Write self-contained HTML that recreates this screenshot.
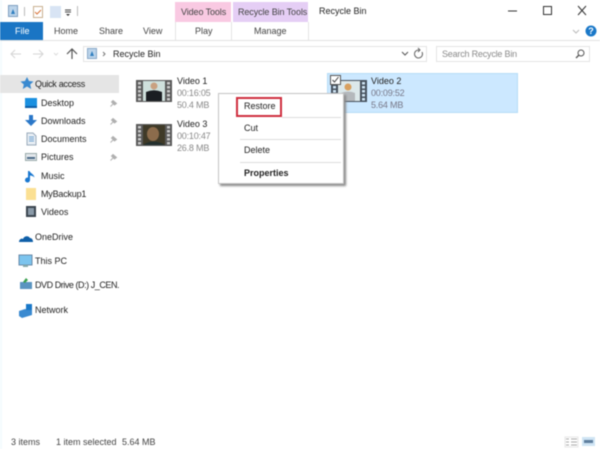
<!DOCTYPE html>
<html><head><meta charset="utf-8"><style>
html,body{margin:0;padding:0;background:#fff}
#w{position:relative;width:600px;height:449px;overflow:hidden;background:#fff;font:9px/12px "Liberation Sans",sans-serif;color:#222;filter:blur(.4px)}
#w div,#w svg{position:absolute}
.t{white-space:nowrap}
.g{color:#8a8a8a;letter-spacing:-.2px}
.n{left:35px}.m{left:41px}
</style></head><body><div id="w">
<div style="left:0;top:0;width:2px;height:449px;background:#f4fbfe"></div>
<!-- title bar -->
<svg style="left:7px;top:4px" width="72" height="16"><rect x="1.500" y="1.500" width="9" height="11" fill="#bcd4ea" stroke="#7f9fc0"/><path d="M4 10l2-5 2 5z" fill="#2f7fc0"/><path d="M17.500 3v9" stroke="#bbb"/><rect x="26.500" y="2.500" width="9" height="11" fill="#fff" stroke="#c9b190"/><path d="M28 8l2 2 4-4" stroke="#d9743a" fill="none"/><rect x="43" y="2" width="11" height="12" fill="#d8e4f4"/><path d="M58 6h6M58 8h6" stroke="#444"/><path d="M59 10h4l-2 2z" fill="#333"/><path d="M70.500 2v10" stroke="#bbb"/></svg>
<div style="left:175px;top:2px;width:56px;height:20px;background:#f9c9e2"></div>
<div style="left:233px;top:2px;width:75px;height:20px;background:#e5cef5"></div>
<div class="t" style="left:181px;top:6px;color:#444;letter-spacing:-.1px">Video Tools</div>
<div class="t" style="left:238px;top:6px;color:#444;letter-spacing:-.1px">Recycle Bin Tools</div>
<div class="t" style="left:319px;top:5px;color:#222">Recycle Bin</div>
<svg style="left:500px;top:2px" width="100" height="36"><path d="M8 9h9" stroke="#333"/><rect x="43.500" y="4.500" width="8" height="8" fill="none" stroke="#333"/><path d="M78 4l8 9M86 4l-8 9" stroke="#333"/><path d="M73 28l3 3 3-3" stroke="#bbb" fill="none"/><circle cx="91" cy="29" r="5.500" fill="#1a78c8"/></svg>
<div style="left:588px;top:25px;color:#fff;font-weight:bold;width:6px;text-align:center;font-size:9px">?</div>
<!-- tabs -->
<div style="left:0;top:22px;width:43px;height:18px;background:#1a75c4"></div>
<div class="t" style="left:15px;top:25px;color:#fff">File</div>
<div class="t" style="left:54px;top:25px;color:#444">Home</div>
<div class="t" style="left:99px;top:25px;color:#444">Share</div>
<div class="t" style="left:143px;top:25px;color:#444">View</div>
<div class="t" style="left:195px;top:25px;color:#444">Play</div>
<div class="t" style="left:254px;top:25px;color:#444">Manage</div>
<div style="left:175px;top:22px;width:1px;height:18px;background:#e4e4e4"></div>
<div style="left:231px;top:22px;width:1px;height:18px;background:#e4e4e4"></div>
<div style="left:308px;top:22px;width:1px;height:18px;background:#e4e4e4"></div>
<div style="left:0;top:40px;width:600px;height:1px;background:#e2e2e2"></div>
<!-- address -->
<svg style="left:8px;top:46px" width="72" height="16"><path d="M3 8h10M7 4l-4 4 4 4" stroke="#d4d4d4" fill="none"/><path d="M25 8h10M31 4l4 4-4 4" stroke="#d4d4d4" fill="none"/><path d="M46 7l2 2 2-2" stroke="#ddd" fill="none"/><path d="M64 13V3M59 8l5-5 5 5" stroke="#555" fill="none" stroke-width="1.200"/></svg>
<div style="left:83px;top:46px;width:344px;height:16px;border:1px solid #e4e4e4;box-sizing:border-box"></div>
<svg style="left:86px;top:47px" width="20" height="14"><rect x="1.500" y="1.500" width="9" height="10" fill="#bcd4ea" stroke="#8aa9c9"/><path d="M4 9l2-5 2 5z" fill="#2f7fc0"/><path d="M17 5l2 2-2 2" stroke="#777" fill="none"/></svg>
<div class="t" style="left:113px;top:48px">Recycle Bin</div>
<svg style="left:401px;top:47px" width="20" height="14"><path d="M1 5l3 3 3-3" stroke="#555" fill="none"/></svg>
<svg style="left:411px;top:46px" width="16" height="16"><path d="M11 6a4 4 0 1 1-3-2" stroke="#666" fill="none"/><path d="M7 2l2 2-2 2" stroke="#666" fill="none"/></svg>
<div style="left:436px;top:46px;width:154px;height:16px;border:1px solid #e4e4e4;box-sizing:border-box"></div>
<div class="t g" style="left:442px;top:48px">Search Recycle Bin</div>
<svg style="left:574px;top:48px" width="12" height="12"><circle cx="7" cy="5" r="3" fill="none" stroke="#555"/><path d="M5 7l-3 3" stroke="#555" stroke-width="1.300"/></svg>
<!-- sidebar -->
<div style="left:0;top:75px;width:119px;height:18px;background:#e5e5e5"></div>
<svg style="left:20px;top:76px" width="14" height="14"><path d="M7 1l2 4 4.500.500-3.300 3 1 4.500L7 10.500 2.800 13l1-4.500-3.300-3L5 5z" fill="#3a8ad0"/></svg>
<div class="t n" style="top:78px;letter-spacing:-.3px">Quick access</div>
<svg style="left:24px;top:96px" width="14" height="124">
<rect x="1" y="2" width="12" height="9" fill="#1a90e0"/><rect x="1" y="10" width="12" height="2" fill="#0d5fa8"/>
<path d="M5 19h4v5h4l-6 6-6-6h4z" fill="#2a77c8"/>
<path d="M3 37h6l3 3v9H3z" fill="#e8eef4" stroke="#9ab"/><path d="M5 41h5M5 43h5M5 45h5" stroke="#6fa3d0"/>
<rect x="1.500" y="57.500" width="11" height="7" fill="#e4e8ec" stroke="#9aa"/><path d="M3 62h8" stroke="#4a6a88" stroke-width="2"/>
<path d="M4 75h1.500c1 2.500 4.500 3 5 6.500-1.500-1.500-3-2-4.500-2V84a2.500 2.500 0 1 1-2-2.400z" fill="#1a78d0"/>
<rect x="2" y="92" width="10" height="12" fill="#fbe093"/>
<rect x="2" y="110" width="10" height="11" fill="#3c4650"/><rect x="4" y="112" width="6" height="7" fill="#8a9aa8"/>
</svg>
<div class="t m" style="top:97px">Desktop</div>
<div class="t m" style="top:115px">Downloads</div>
<div class="t m" style="top:133px">Documents</div>
<div class="t m" style="top:151px">Pictures</div>
<div class="t m" style="top:170px">Music</div>
<div class="t m" style="top:188px;letter-spacing:-.2px">MyBackup1</div>
<div class="t m" style="top:206px">Videos</div>
<svg style="left:109px;top:98px" width="10" height="66" fill="#b0b0b0" stroke="#b0b0b0"><path d="M1.500 8.500l3-3" fill="none"/><path d="M4 2.500l3.500 3-2 1.500-3-3z"/><path d="M1.500 26.500l3-3" fill="none"/><path d="M4 20.500l3.500 3-2 1.500-3-3z"/><path d="M1.500 44.500l3-3" fill="none"/><path d="M4 38.500l3.500 3-2 1.500-3-3z"/><path d="M1.500 62.500l3-3" fill="none"/><path d="M4 56.500l3.500 3-2 1.500-3-3z"/></svg>
<svg style="left:18px;top:231px" width="16" height="90">
<path d="M1 11c0-3 3-4 4-3 1-3 5-4 7-1 2 0 3 2 3 4z" fill="#0f5fa8"/>
<rect x="1" y="24" width="13" height="10" fill="#7cc4ee" stroke="#6a8aa8"/><rect x="5" y="34" width="5" height="2" fill="#8aa"/>
<rect x="2" y="51" width="12" height="7" fill="#5a94c0"/><path d="M5 51l3-4 2 2-3 3z" fill="#3aa050"/>
<path d="M1 80l6-2 7 1v5l-10 3-3-2z" fill="#3a8ad0"/><rect x="8" y="73" width="6" height="6" fill="#1a78c8"/>
</svg>
<div class="t n" style="top:231px">OneDrive</div>
<div class="t n" style="top:255px">This PC</div>
<div class="t n" style="top:279px;letter-spacing:-.45px">DVD Drive (D:) J_CEN.</div>
<div class="t n" style="top:304px">Network</div>
<!-- selection -->
<div style="left:327px;top:73px;width:191px;height:40px;background:#cce8ff;border:1px solid #b5dcf7;box-sizing:border-box"></div>
<!-- thumbnails -->
<svg style="left:136px;top:80px" width="36" height="66">
<rect width="36" height="22" fill="#5a5a5a"/><rect x="7" y="1" width="22" height="20" fill="#cfe0dc"/>
<circle cx="18" cy="6" r="3.500" fill="#c9a080"/><path d="M10 21v-9q8-3.500 16 0v9z" fill="#1a1d22"/>
<g fill="#c8c8c8"><rect x="2" y="2" width="3" height="2.500"/><rect x="2" y="6" width="3" height="2.500"/><rect x="2" y="10" width="3" height="2.500"/><rect x="2" y="14" width="3" height="2.500"/><rect x="2" y="18" width="3" height="2.500"/><rect x="31" y="2" width="3" height="2.500"/><rect x="31" y="6" width="3" height="2.500"/><rect x="31" y="10" width="3" height="2.500"/><rect x="31" y="14" width="3" height="2.500"/><rect x="31" y="18" width="3" height="2.500"/></g>
<g transform="translate(0 44)"><rect width="36" height="22" fill="#5a5a5a"/><rect x="7" y="1" width="22" height="20" fill="#3f3a28"/><ellipse cx="17" cy="10" rx="6" ry="7" fill="#8c6c4c"/><path d="M7 21q10-7 22 0z" fill="#23302e"/>
<g fill="#c8c8c8"><rect x="2" y="2" width="3" height="2.500"/><rect x="2" y="6" width="3" height="2.500"/><rect x="2" y="10" width="3" height="2.500"/><rect x="2" y="14" width="3" height="2.500"/><rect x="2" y="18" width="3" height="2.500"/><rect x="31" y="2" width="3" height="2.500"/><rect x="31" y="6" width="3" height="2.500"/><rect x="31" y="10" width="3" height="2.500"/><rect x="31" y="14" width="3" height="2.500"/><rect x="31" y="18" width="3" height="2.500"/></g></g>
</svg>
<svg style="left:331px;top:80px" width="36" height="22">
<rect width="36" height="22" fill="#47525e"/><rect x="7" y="1" width="22" height="20" fill="#dce8ea"/>
<circle cx="17" cy="7" r="3.500" fill="#d8a060"/><path d="M10 21v-8q7-3 14 0v8z" fill="#b4b8bc"/>
<g fill="#cfe4f4"><rect x="2" y="2" width="3" height="2.500"/><rect x="2" y="6" width="3" height="2.500"/><rect x="2" y="10" width="3" height="2.500"/><rect x="2" y="14" width="3" height="2.500"/><rect x="2" y="18" width="3" height="2.500"/><rect x="31" y="2" width="3" height="2.500"/><rect x="31" y="6" width="3" height="2.500"/><rect x="31" y="10" width="3" height="2.500"/><rect x="31" y="14" width="3" height="2.500"/><rect x="31" y="18" width="3" height="2.500"/></g>
</svg>
<svg style="left:330px;top:75px" width="12" height="12"><rect x=".5" y=".5" width="10" height="9" fill="#fff" stroke="#555"/><path d="M2.500 5l2 2 4-5" fill="none" stroke="#444"/></svg>
<div class="t" style="left:177px;top:75px">Video 1</div>
<div class="t g" style="left:177px;top:87px">00:16:05</div>
<div class="t g" style="left:177px;top:99px">50.4 MB</div>
<div class="t" style="left:177px;top:118px">Video 3</div>
<div class="t g" style="left:177px;top:130px">00:10:47</div>
<div class="t g" style="left:177px;top:142px">26.8 MB</div>
<div class="t" style="left:371px;top:75px">Video 2</div>
<div class="t g" style="left:371px;top:87px;color:#778">00:09:52</div>
<div class="t g" style="left:371px;top:99px;color:#778">5.64 MB</div>
<!-- menu -->
<div style="left:218px;top:93px;width:126px;height:91px;background:#fff;border:1px solid #c4c4c4;box-sizing:border-box;box-shadow:2px 2px 2px #888"></div>
<div style="left:236px;top:97px;width:46px;height:20px;border:2px solid #cf2f3f;box-sizing:border-box"></div>
<div class="t" style="left:244px;top:100px">Restore</div>
<div class="t" style="left:244px;top:122px">Cut</div>
<div class="t" style="left:244px;top:144px">Delete</div>
<div class="t" style="left:244px;top:167px;font-weight:bold">Properties</div>
<div style="left:282px;top:117px;width:59px;height:1px;background:#ddd"></div>
<div style="left:240px;top:139px;width:101px;height:1px;background:#ddd"></div>
<div style="left:240px;top:162px;width:101px;height:1px;background:#ddd"></div>
<!-- status -->
<div class="t" style="left:11px;top:436px;color:#444">3 items</div>
<div class="t" style="left:56px;top:436px;color:#444">1 item selected</div>
<div class="t" style="left:122px;top:436px;color:#444">5.64 MB</div>
<svg style="left:564px;top:436px" width="32" height="12"><path d="M2 3h3M2 6h3M2 9h3M7 3h6M7 6h6M7 9h6" stroke="#aaa"/><rect x="1" y="1" width="13" height="10" fill="none" stroke="#e6e6e6"/><rect x="18" y="1" width="13" height="9" fill="#cfe4f4"/><rect x="20" y="4" width="9" height="3" fill="#5f7f9f"/></svg>
</div></body></html>
